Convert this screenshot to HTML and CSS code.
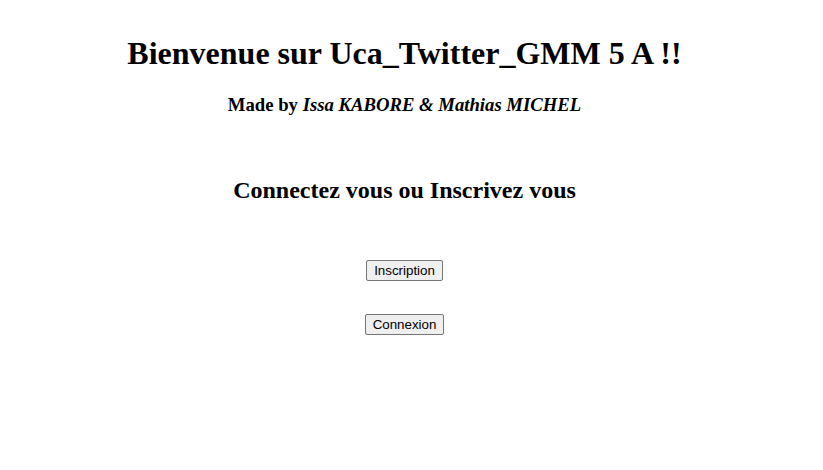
FILE: index.html
```html
<!DOCTYPE html>
<html lang="fr">
<head>
<meta charset="utf-8">
<title>Uca_Twitter</title>
<link rel="stylesheet" href="styles.css">
</head>
<body>
<div class="page">
  <h1 class="title">Bienvenue sur Uca_Twitter_GMM 5 A !!</h1>
  <h3 class="credits">Made by <em>Issa KABORE &amp; Mathias MICHEL</em></h3>
  <h2 class="subtitle">Connectez vous ou Inscrivez vous</h2>
  <div class="actions">
    <button class="btn" type="button">Inscription</button>
    <button class="btn" type="button">Connexion</button>
  </div>
</div>
</body>
</html>
```
FILE: styles.css
```css
body {
  margin: 8px;
  font-family: "Liberation Serif", "Times New Roman", serif;
  color: #000;
  background: #fff;
}
.page {
  width: 793px;
  text-align: center;
}
.title {
  font-size: 32px;
  margin: 27px 0 22px;
}
.credits {
  font-size: 18.72px;
  margin: 0;
}
.subtitle {
  font-size: 24px;
  margin: 61px 0 0;
}
.actions {
  display: flex;
  flex-direction: column;
  align-items: center;
  gap: 33px;
  margin-top: 56px;
}
.btn {
  font-family: "Liberation Sans", Arial, sans-serif;
  font-size: 13.33px;
  line-height: 15px;
  color: #000;
  background: #efefef;
  border: 1px solid #767676;
  border-radius: 2px;
  padding: 2px 7px;
}
```
